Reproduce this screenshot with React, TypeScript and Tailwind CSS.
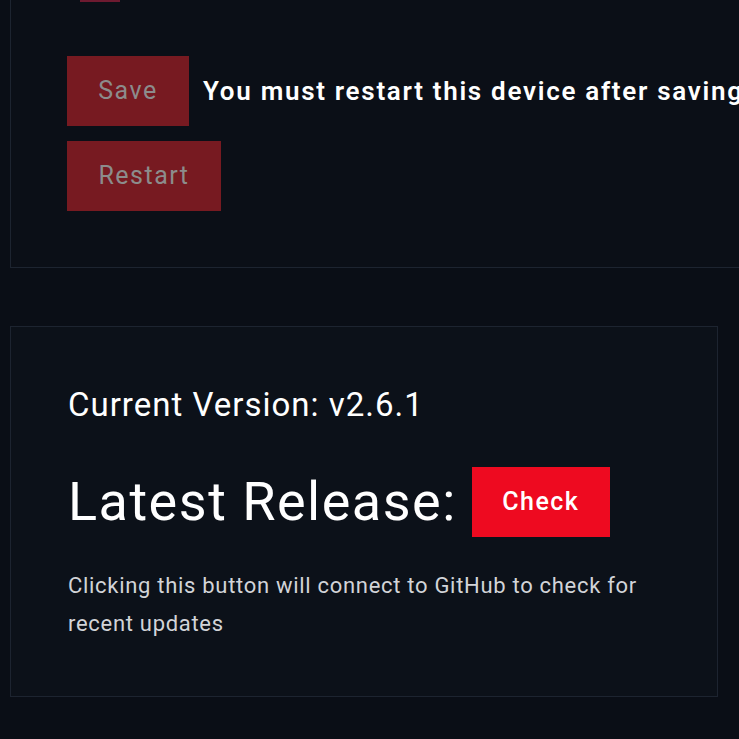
import React from "react";

const font = { fontFamily: "Roboto, 'Noto Sans', sans-serif" };

const SaveSection = () => {
  return (
    <div className="ml-[10px] w-[820px] border-l border-b border-[#1d2430] bg-[#0b0f17] px-[56px] pb-[56px]">
      <div className="ml-[13px] h-[2px] w-[40px] bg-[#6e1a30]" />
      <div className="mt-[54px] flex items-center gap-[14px]">
        <button className="h-[70px] w-[122px] bg-[#771a21] text-[25px] tracking-[1.5px] text-[#8c8c8c]">
          Save
        </button>
        <span className="whitespace-nowrap text-[26px] font-semibold tracking-[1.7px] text-white">
          You must restart this device after saving
        </span>
      </div>
      <button className="mt-[15px] h-[70px] w-[154px] bg-[#771a21] text-[25px] tracking-[1.5px] text-[#8c8c8c]">
        Restart
      </button>
    </div>
  );
};

const VersionSection = () => {
  return (
    <div className="ml-[10px] mt-[58px] w-[708px] border border-[#1d2430] bg-[#0c1119] px-[57px] pt-[58px] pb-[53px]">
      <h3 className="text-[33px] leading-[40px] tracking-[1px] text-white">Current Version: v2.6.1</h3>
      <div className="mt-[42px] flex items-center gap-[15px]">
        <h2 className="text-[54px] leading-[70px] tracking-[1.5px] text-white">Latest Release:</h2>
        <button className="h-[70px] w-[138px] bg-[#ee0a20] text-[25px] font-medium tracking-[1.5px] text-white">
          Check
        </button>
      </div>
      <p className="mt-[30px] text-[22px] leading-[38px] tracking-[0.7px] text-[#d2d4d8]">
        Clicking this button will connect to GitHub to check for recent updates
      </p>
    </div>
  );
};

export default function App() {
  return (
    <div className="h-[739px] overflow-hidden bg-[#0a0e16]" style={font}>
      <SaveSection />
      <VersionSection />
    </div>
  );
}
